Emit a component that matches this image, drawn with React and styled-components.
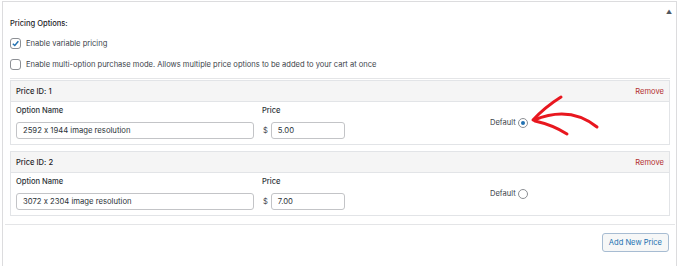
import React from 'react';
import styled, { createGlobalStyle } from 'styled-components';

const GlobalStyle = createGlobalStyle`
  html, body {
    margin: 0;
    padding: 0;
    background: #fff;
  }
  body {
    font-family: Inter, "Liberation Sans", sans-serif;
    font-size: 7.55px;
    font-feature-settings: "calt" 0;
    color: #3c434a;
  }
`

const Panel = styled.div`
  position: relative;
  box-sizing: border-box;
  height: 265px;
  margin: 1px 3px 0 2px;
  padding: 0 6px 0 7px;
  border: 1px solid #dcdcde;
  border-bottom: none;
`

const Toggle = styled.span`
  position: absolute;
  top: 6px;
  right: 4px;
  font-size: 6px;
  color: #50575e;
`

const Title = styled.div`
  margin-top: 17px;
  line-height: 10px;
  font-weight: 500;
  color: #1d2327;
`

const CheckRow = styled.label`
  display: flex;
  align-items: center;
  gap: 5px;
  height: 12px;
  margin-top: ${p => p.$gap}px;
`

const CheckBox = styled.span`
  box-sizing: border-box;
  width: 11px;
  height: 11px;
  border: 1px solid #8c8f94;
  border-radius: 3px;
  display: flex;
  align-items: center;
  justify-content: center;
  background: #fff;
`

const Separator = styled.div`
  margin: ${p => p.$margin};
  border-top: 1px solid #e4e5e7;
`

const PriceBox = styled.div`
  margin-top: ${p => p.$top}px;
  border: 1px solid #e2e4e7;
`

const BoxHeader = styled.div`
  display: flex;
  justify-content: space-between;
  align-items: center;
  height: 20px;
  padding: 0 5px;
  background: #f5f5f5;
  border-bottom: 1px solid #e2e4e7;
  font-weight: 500;
  color: #1d2327;
`

const RemoveLink = styled.span`
  font-weight: 400;
  color: #b32d2e;
`

const BoxBody = styled.div`
  display: grid;
  grid-template-columns: 238px 220px auto;
  column-gap: 8px;
  align-items: center;
  padding: 4px 5px 5px;
`

const Field = styled.div`
  display: flex;
  flex-direction: column;
  gap: 6px;
`

const FieldLabel = styled.div`
  line-height: 10px;
  font-weight: 500;
  color: #2c3338;
`

const Input = styled.div`
  box-sizing: border-box;
  width: ${p => p.$width}px;
  height: 17px;
  padding: 0 6px;
  display: flex;
  align-items: center;
  border: 1px solid #c3c4c7;
  border-radius: 3px;
  color: #2c3338;
  font-size: 7.7px;
`

const PriceRow = styled.div`
  display: flex;
  align-items: center;
  gap: 3px;
  padding-left: 1px;
`

const DefaultCell = styled.div`
  display: flex;
  align-items: center;
  gap: 2px;
`

const Radio = styled.span`
  box-sizing: border-box;
  width: 10px;
  height: 10px;
  border: 1px solid #8c8f94;
  border-radius: 50%;
  display: flex;
  align-items: center;
  justify-content: center;
  &::after {
    content: '';
    width: 4px;
    height: 4px;
    border-radius: 50%;
    background: ${p => (p.$checked ? '#2271b1' : 'transparent')};
  }
`

const Footer = styled.div`
  display: flex;
  justify-content: flex-end;
  margin-top: 8px;
  padding-right: 1px;
`

const Button = styled.button`
  box-sizing: border-box;
  height: 19px;
  padding: 0 6px;
  font-family: inherit;
  font-size: 7.55px;
  font-weight: 400;
  color: #2271b1;
  background: #f6f7f7;
  border: 1px solid #a7bcd2;
  border-radius: 3px;
`

const Arrow = styled.svg`
  position: absolute;
  left: 522px;
  top: 93px;
  overflow: visible;
`

const prices = [
  { id: 1, name: '2592 x 1944 image resolution', amount: '5.00', checked: true, top: 1 },
  { id: 2, name: '3072 x 2304 image resolution', amount: '7.00', checked: false, top: 6 },
]

export default function App() {
  return (
    <>
      <GlobalStyle />
      <Panel>
        <Toggle>▲</Toggle>
        <Title>Pricing Options:</Title>
        <CheckRow $gap={8}>
          <CheckBox>
            <svg width="9" height="9" viewBox="0 0 10 10">
              <path d="M2 5.2 L4.2 7.3 L8.2 2.6" fill="none" stroke="#2271b1" strokeWidth="1.6" />
            </svg>
          </CheckBox>
          Enable variable pricing
        </CheckRow>
        <CheckRow $gap={9}>
          <CheckBox />
          Enable multi-option purchase mode. Allows multiple price options to be added to your cart at once
        </CheckRow>
        <Separator $margin="8px 0 0 0" />
        {prices.map(p => (
          <PriceBox key={p.id} $top={p.top}>
            <BoxHeader>
              <span>Price ID: {p.id}</span>
              <RemoveLink>Remove</RemoveLink>
            </BoxHeader>
            <BoxBody>
              <Field>
                <FieldLabel>Option Name</FieldLabel>
                <Input $width={238}>{p.name}</Input>
              </Field>
              <Field>
                <FieldLabel>Price</FieldLabel>
                <PriceRow>
                  <span>$</span>
                  <Input $width={74}>{p.amount}</Input>
                </PriceRow>
              </Field>
              <DefaultCell>
                Default <Radio $checked={p.checked} />
              </DefaultCell>
            </BoxBody>
          </PriceBox>
        ))}
        <Separator $margin="8px -5px 0 -5px" />
        <Footer>
          <Button>Add New Price</Button>
        </Footer>
        <Arrow width="80" height="45" viewBox="0 0 80 45">
          <g fill="none" stroke="#e8171f" strokeWidth="3" strokeLinecap="round">
            <path d="M8 25 Q20 12 36 2" />
            <path d="M10 26 Q28 30 42 39" />
            <path d="M9 25 Q45 10 72 32" />
          </g>
        </Arrow>
      </Panel>
    </>
  )
}
